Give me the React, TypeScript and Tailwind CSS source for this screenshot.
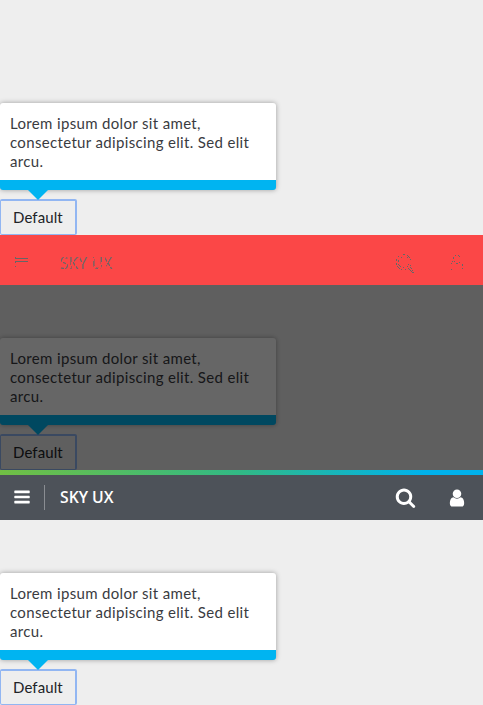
import type { ReactNode } from 'react';

function Popover({ children }: { children?: ReactNode }) {
  return (
    <div className="relative flex h-[185px] flex-col overflow-hidden bg-[#eeeeee]">
      <div className="mt-[53px] h-[87px] w-[276px] shrink-0 rounded-[3px] border-b-[10px] border-[#00b4f1] bg-white p-[10px] pr-0 pt-[11px] text-[15px] leading-[19px] whitespace-nowrap text-[#3a3b3f] shadow-[0_0_5px_rgba(0,0,0,0.35)]">
        <div className="tracking-[0.34px]">Lorem ipsum dolor sit amet,</div>
        <div className="tracking-[0.34px]">consectetur adipiscing elit. Sed elit</div>
        <div className="tracking-[0.34px]">arcu.</div>
      </div>
      <svg className="z-10 ml-[28px] h-[10px] w-[20px] shrink-0" viewBox="0 0 20 10">
        <path d="M0 0H20L10 10Z" fill="#00b4f1" />
      </svg>
      <button className="-mt-px h-[36px] w-[77px] shrink-0 rounded-[2px] border-2 border-b border-l border-[#92b6f2] pl-3 text-left text-[15px] leading-[33px] tracking-[0.1px] text-[#212327]">
        Default
      </button>
      {children}
    </div>
  );
}

function DiffHeader() {
  return (
    <div className="flex h-[50px] items-center bg-[#fb4747]">
      <svg className="ml-[15px] h-[14px] w-[14px]" viewBox="0 0 14 14" shapeRendering="crispEdges" fill="#666">
        <path d="M0 4h1v1H0zM0 5h13v1H0zM0 8h13v1H0zM0 9h1v1H0zM0 13h1v1H0z" />
      </svg>
      <span className="ml-[31px] bg-[repeating-linear-gradient(115deg,#666_0_3px,transparent_3px_4.5px)] bg-clip-text pt-[5px] font-['Open_Sans',sans-serif] text-[16px] leading-5 text-transparent">
        SKY UX
      </span>
      <div className="mr-[18px] ml-auto flex items-start gap-[34px] self-start pt-[19px]">
        <svg className="h-5 w-5" viewBox="0 0 20 20" shapeRendering="crispEdges" fill="#666">
          <path d="M8 0h2v1H8zM12 1h1v1h-1zM3 2h1v1H3zM13 2h1v1h-1zM6 3h1v1H6zM12 3h1v1h-1zM14 3h1v1h-1zM1 5h1v2H1zM3 6h1v2H3zM15 5h1v1h-1zM1 9h1v2H1zM3 10h1v1H3zM2 12h1v1H2zM4 11h1v1H4zM3 13h1v1H3zM5 12h1v1H5zM4 14h1v1H4zM6 15h1v1H6zM8 13h1v1H8zM10 15h1v1h-1zM12 12h1v1h-1zM13 10h1v1h-1zM15 11h1v1h-1zM13 14h1v1h-1zM14 15h1v1h-1zM15 16h1v1h-1zM16 17h1v1h-1zM17 18h2v1h-2zM15 13h1v1h-1zM16 14h1v1h-1zM17 16h1v1h-1z" />
        </svg>
        <svg className="mt-px h-4 w-4" viewBox="0 0 16 16" shapeRendering="crispEdges" fill="#666">
          <path d="M6 0h1v1H6zM9 0h1v1H9zM10 1h1v1h-1zM4 2h1v2H4zM3 6h1v1H3zM5 6h1v1H5zM2 8h1v1H2zM7 8h2v1H7zM10 7h1v1h-1zM13 9h1v2h-1zM13 13h1v1h-1zM2 14h1v1H2z" />
        </svg>
      </div>
    </div>
  );
}

function Header() {
  return (
    <div className="h-[50px] bg-[#4d5259]">
      <div className="h-[5px] bg-[linear-gradient(to_right,#71bf44,#31b986_50%,#00b2ec_88%)]" />
      <div className="flex h-[45px] items-center text-white">
        <svg className="-mt-px ml-[13px] h-[18px] w-[18px]" viewBox="0 0 1792 1792" fill="currentColor">
          <path d="M1664 1344v128q0 26-19 45t-45 19H192q-26 0-45-19t-19-45v-128q0-26 19-45t45-19h1408q26 0 45 19t19 45zm0-512v128q0 26-19 45t-45 19H192q-26 0-45-19t-19-45V832q0-26 19-45t45-19h1408q26 0 45 19t19 45zm0-512v128q0 26-19 45t-45 19H192q-26 0-45-19t-19-45V320q0-26 19-45t45-19h1408q26 0 45 19t19 45z" />
        </svg>
        <div className="ml-[13px] h-[25px] w-px bg-[#8a8d92]" />
        <span className="ml-[15px] font-['Open_Sans',sans-serif] text-[15.75px] font-semibold">SKY UX</span>
        <svg className="mr-[31px] ml-auto h-[21px] w-[21px]" viewBox="0 0 1792 1792" fill="currentColor">
          <path d="M1216 832q0-185-131.5-316.5t-316.5-131.5-316.5 131.5-131.5 316.5 131.5 316.5 316.5 131.5 316.5-131.5 131.5-316.5zm512 832q0 52-38 90t-90 38q-54 0-90-38l-343-342q-179 124-399 124-143 0-273.5-55.5t-225-150-150-225-55.5-273.5 55.5-273.5 150-225 225-150 273.5-55.5 273.5 55.5 225 150 150 225 55.5 273.5q0 220-124 399l343 343q37 37 37 90z" />
        </svg>
        <svg className="mr-4 h-5 w-5" viewBox="0 0 1792 1792" fill="currentColor">
          <path d="M1536 1399q0 109-62.5 187t-150.5 78h-854q-88 0-150.5-78t-62.5-187q0-85 8.5-160.5t31.5-152 58.5-131 94-89 134.5-34.5q131 128 313 128t313-128q76 0 134.5 34.5t94 89 58.5 131 31.5 152 8.5 160.5zm-256-887q0 159-112.5 271.5t-271.5 112.5-271.5-112.5-112.5-271.5 112.5-271.5 271.5-112.5 271.5 112.5 112.5 271.5z" />
        </svg>
      </div>
    </div>
  );
}

export default function App() {
  return (
    <main className="h-[705px] w-[483px] overflow-hidden bg-[#eeeeee] pt-[50px] font-[Lato,sans-serif]">
      <Popover />
      <DiffHeader />
      <Popover>
        <div className="absolute inset-0 z-20 bg-black/60" />
      </Popover>
      <Header />
      <Popover />
    </main>
  );
}
